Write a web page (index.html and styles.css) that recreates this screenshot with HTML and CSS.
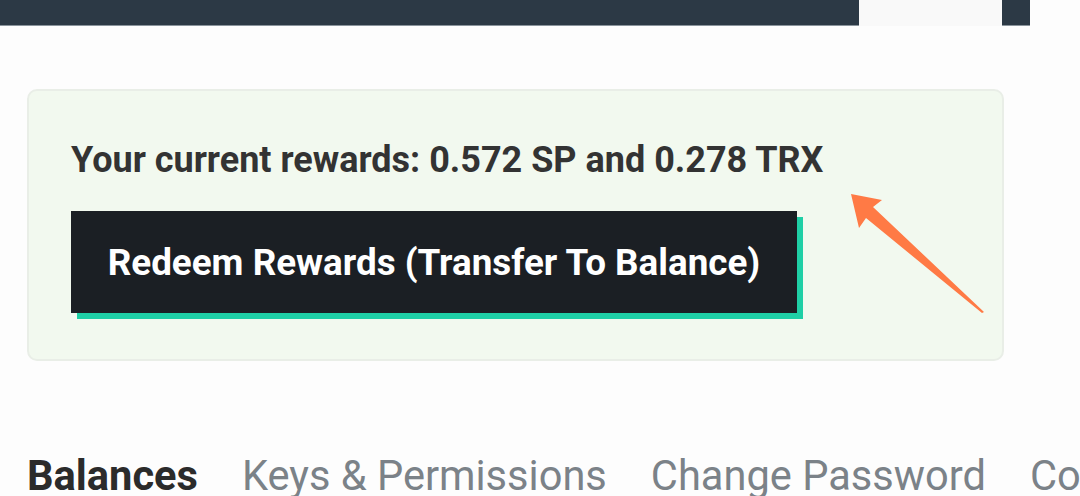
FILE: index.html
```html
<!DOCTYPE html>
<html lang="en">

<head>
  <meta charset="UTF-8">
  <meta name="viewport" content="width=device-width, initial-scale=1.0">
  <title>Wallet | Rewards</title>
  <link rel="stylesheet" href="styles.css">
</head>

<body>

  <div class="topbar">
    <div class="topbar-main"></div>
    <div class="topbar-gap"></div>
    <div class="topbar-end"></div>
  </div>

  <div class="page">
    <div class="rewards-card">
      <p class="rewards-text">Your current rewards: 0.572 SP and 0.278 TRX</p>
      <button class="redeem-btn">Redeem Rewards (Transfer To Balance)</button>

      <svg class="arrow" width="150" height="130" viewBox="0 0 150 130">
        <polygon points="0,0 31,6 22,13 133,118 131,119 15,24 8,34" fill="#ff7a45" />
      </svg>
    </div>

    <nav class="tabs">
      <a href="#" class="active">Balances</a>
      <a href="#">Keys &amp; Permissions</a>
      <a href="#">Change Password</a>
      <a href="#">Communities</a>
    </nav>
  </div>

</body>

</html>
```

FILE: styles.css
```css
* {
  box-sizing: border-box;
  margin: 0;
  padding: 0;
  font-family: 'Roboto', sans-serif;
}

body {
  background: #fdfdfd;
  width: 1080px;
  height: 496px;
  overflow: hidden;
}

.topbar {
  display: flex;
  height: 26px;
  width: 1030px;
}

.topbar-main {
  width: 859px;
  background: #2c3945;
  border-bottom: 1px solid #8a949c;
}

.topbar-gap {
  width: 143px;
  background: #f9f9f9;
}

.topbar-end {
  flex: 1;
  background: #2c3945;
  border-bottom: 1px solid #8a949c;
}

.page {
  padding: 63px 0 0 27px;
}

.rewards-card {
  position: relative;
  width: 977px;
  height: 272px;
  background: #f2f9ef;
  border: 2px solid #e9eee7;
  border-radius: 10px;
  padding: 47px 0 0 42px;
}

.rewards-text {
  font-size: 36px;
  font-weight: 700;
  color: #333;
  line-height: 44px;
}

.redeem-btn {
  margin-top: 29px;
  width: 726px;
  height: 102px;
  background: #1b1f24;
  color: #fff;
  border: none;
  font-size: 36.8px;
  font-weight: 700;
  box-shadow: 6px 6px 0 #1fcfa6;
  cursor: pointer;
}

.arrow {
  position: absolute;
  left: 822px;
  top: 103px;
}

.tabs {
  display: flex;
  gap: 44px;
  margin-top: 90px;
  white-space: nowrap;
  overflow: hidden;
}

.tabs a {
  font-size: 41.6px;
  line-height: 50px;
  color: #7b8288;
  text-decoration: none;
}

.tabs a.active {
  color: #2b2b2b;
  font-weight: 700;
}
```
